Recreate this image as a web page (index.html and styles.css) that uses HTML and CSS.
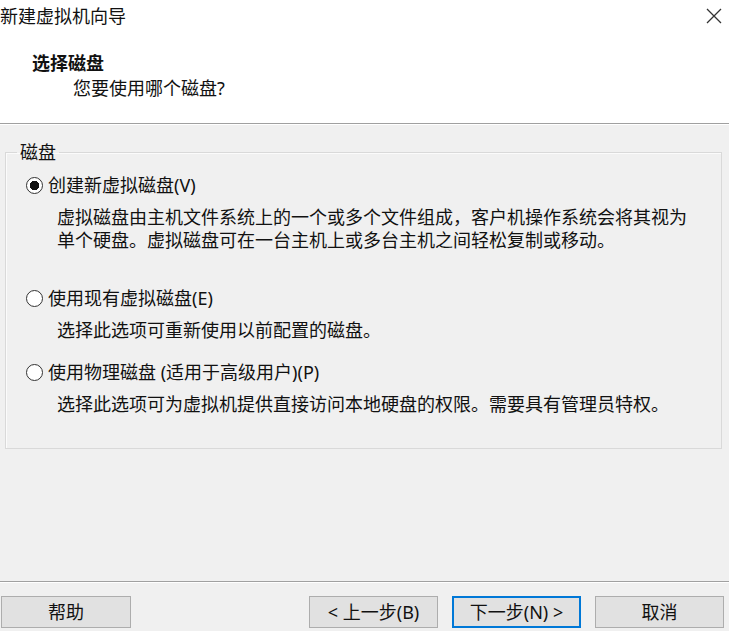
FILE: index.html
```html
<!DOCTYPE html>
<html lang="zh-CN">
<head>
<meta charset="utf-8">
<title>新建虚拟机向导</title>
<link rel="stylesheet" href="styles.css">
</head>
<body>
<div class="dialog">
  <div class="header">
    <div class="titlebar">
      <span class="title">新建虚拟机向导</span>
      <span class="close" aria-label="关闭">
        <svg width="16" height="16" viewBox="0 0 16 16"><path d="M1 1 L15 15 M15 1 L1 15" stroke="#333" stroke-width="1.3" fill="none"/></svg>
      </span>
    </div>
    <div class="heading">选择磁盘</div>
    <div class="subheading">您要使用哪个磁盘?</div>
  </div>
  <div class="sep"></div>
  <div class="main">
    <fieldset class="group">
      <legend class="legend">磁盘</legend>
      <div class="option">
        <span class="radio checked"></span>
        <span class="label">创建新虚拟磁盘(V)</span>
      </div>
      <div class="desc">虚拟磁盘由主机文件系统上的一个或多个文件组成，客户机操作系统会将其视为<br>单个硬盘。虚拟磁盘可在一台主机上或多台主机之间轻松复制或移动。</div>
      <div class="option opt2">
        <span class="radio"></span>
        <span class="label">使用现有虚拟磁盘(E)</span>
      </div>
      <div class="desc">选择此选项可重新使用以前配置的磁盘。</div>
      <div class="option opt3">
        <span class="radio"></span>
        <span class="label">使用物理磁盘 (适用于高级用户)(P)</span>
      </div>
      <div class="desc desc3">选择此选项可为虚拟机提供直接访问本地硬盘的权限。需要具有管理员特权。</div>
    </fieldset>
  </div>
  <div class="sep"></div>
  <div class="footer">
    <button class="btn help">帮助</button>
    <div class="spacer"></div>
    <button class="btn">&lt; 上一步(B)</button>
    <button class="btn primary">下一步(N) &gt;</button>
    <button class="btn">取消</button>
  </div>
</div>
</body>
</html>
```

FILE: styles.css
```css
* { box-sizing: border-box; }
html, body {
  margin: 0;
  padding: 0;
}
body {
  width: 729px;
  height: 631px;
  overflow: hidden;
  background: #f0f0f0;
  font-family: "Noto Sans", "Noto Sans CJK SC", sans-serif;
  font-size: 18px;
  color: #111;
}
.dialog {
  display: flex;
  flex-direction: column;
  height: 631px;
}
.header {
  height: 123px;
  background: #ffffff;
  flex: none;
}
.titlebar {
  display: flex;
  justify-content: space-between;
  align-items: center;
  height: 34px;
  padding: 0 7px 0 0;
}
.title {
  line-height: 24px;
  margin-top: -2px;
}
.close {
  display: flex;
  width: 16px;
  height: 16px;
  margin-top: -3px;
}
.heading {
  margin-top: 17px;
  padding-left: 32px;
  line-height: 25px;
  font-weight: bold;
}
.subheading {
  padding-left: 73px;
  line-height: 25px;
}
.sep {
  flex: none;
  height: 2px;
  border-top: 1px solid #a0a0a0;
  border-bottom: 1px solid #ffffff;
}
.main {
  flex: 1;
  padding-top: 17px;
}
.group {
  margin: 0 7px 0 5px;
  padding: 11px 10px 0 20px;
  height: 307px;
  border: 1px solid #d9d9d9;
  box-shadow: inset 1px 1px 0 #fbfbfb;
}
.legend {
  padding: 0 3px;
  margin-left: -9px;
  line-height: 20px;
}
.option {
  display: flex;
  align-items: center;
  height: 24px;
  gap: 5px;
}
.opt2 { margin-top: 34px; }
.opt3 { margin-top: 18px; }
.radio {
  width: 17px;
  height: 17px;
  border-radius: 50%;
  border: 1px solid #333;
  background: #fff;
  flex: none;
}
.radio.checked {
  background: radial-gradient(circle, #111 0 4.5px, #fff 5px);
}
.label {
  line-height: 24px;
}
.desc {
  margin-top: 9px;
  margin-left: 31px;
  line-height: 23px;
}
.desc3 { margin-top: 9px; }
.footer {
  flex: none;
  height: 48px;
  display: flex;
  align-items: flex-start;
  padding: 13px 5px 0 1px;
  gap: 14px;
}
.spacer { flex: 1; }
.btn {
  width: 129px;
  height: 32px;
  font-family: inherit;
  font-size: 18px;
  color: #111;
  background: #e1e1e1;
  border: 1px solid #adadad;
  border-radius: 0;
  padding: 0;
  line-height: 28px;
}
.help { width: 130px; }
.primary {
  border: 2px solid #0078d7;
}
```
